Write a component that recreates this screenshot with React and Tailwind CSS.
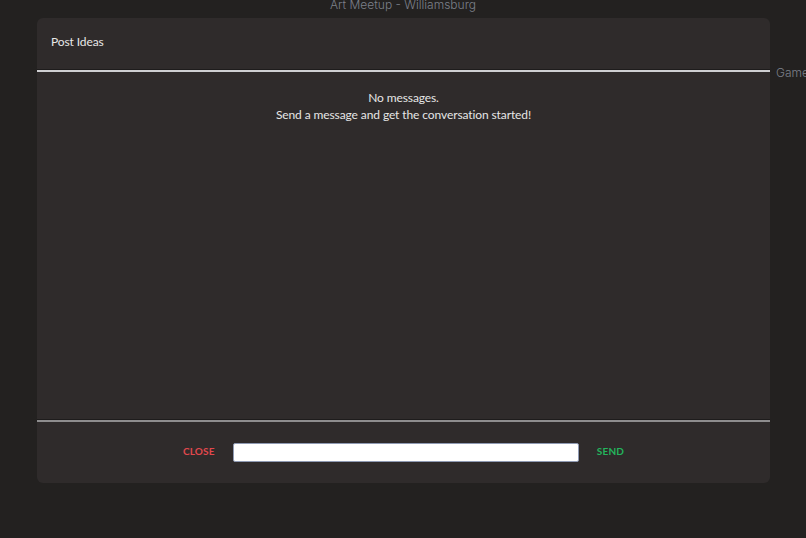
import React from 'react';

const App = () => {
    return (
        <div className="relative w-full h-[538px] overflow-hidden bg-[#232120] font-['Lato',sans-serif]">
            {/* Page behind the modal */}
            <div className="flex flex-col items-center">
                <h1 className="-mt-[4px] text-[12px] leading-[18px] font-light text-[#7c808a] font-['Inter',sans-serif]">
                    Art Meetup - Williamsburg
                </h1>
            </div>
            <div className="absolute left-[776px] top-[64px] text-[12px] font-light text-[#7c808a] font-['Inter',sans-serif] whitespace-nowrap">
                Games Night
            </div>

            {/* Modal */}
            <div className="absolute left-[37px] top-[18px] w-[733px] h-[465px] flex flex-col rounded-md bg-[#2f2b2b]">
                <div className="h-[51px] flex items-center pl-[14px] pb-[4px] text-[12px] tracking-[-0.1px] text-[#e8e8e8]">
                    Post Ideas
                </div>
                <div className="h-px bg-[#1e1c1c]" />
                <div className="h-[2px] bg-[#cfcfd2]" />

                <div className="flex-1 flex flex-col items-center pt-[17px] text-[12px] leading-[17px] tracking-[-0.1px] text-[#e6e6e6]">
                    <p>No messages.</p>
                    <p>Send a message and get the conversation started!</p>
                </div>

                <div className="h-px bg-[#1e1c1c]" />
                <div className="h-[2px] bg-[#8e8d8e]" />
                <div className="h-[61px] flex items-center justify-center gap-[18px]">
                    <button className="text-[10px] font-bold text-[#e0484d] tracking-[0.2px] -mt-[3px]">
                        CLOSE
                    </button>
                    <input
                        type="text"
                        className="w-[346px] h-[19px] bg-white border border-[#8f9ab3] rounded-[2px] outline-none"
                    />
                    <button className="text-[10px] font-bold text-[#23b45c] tracking-[0.2px] -mt-[3px]">
                        SEND
                    </button>
                </div>
            </div>
        </div>
    );
};

export default App;
